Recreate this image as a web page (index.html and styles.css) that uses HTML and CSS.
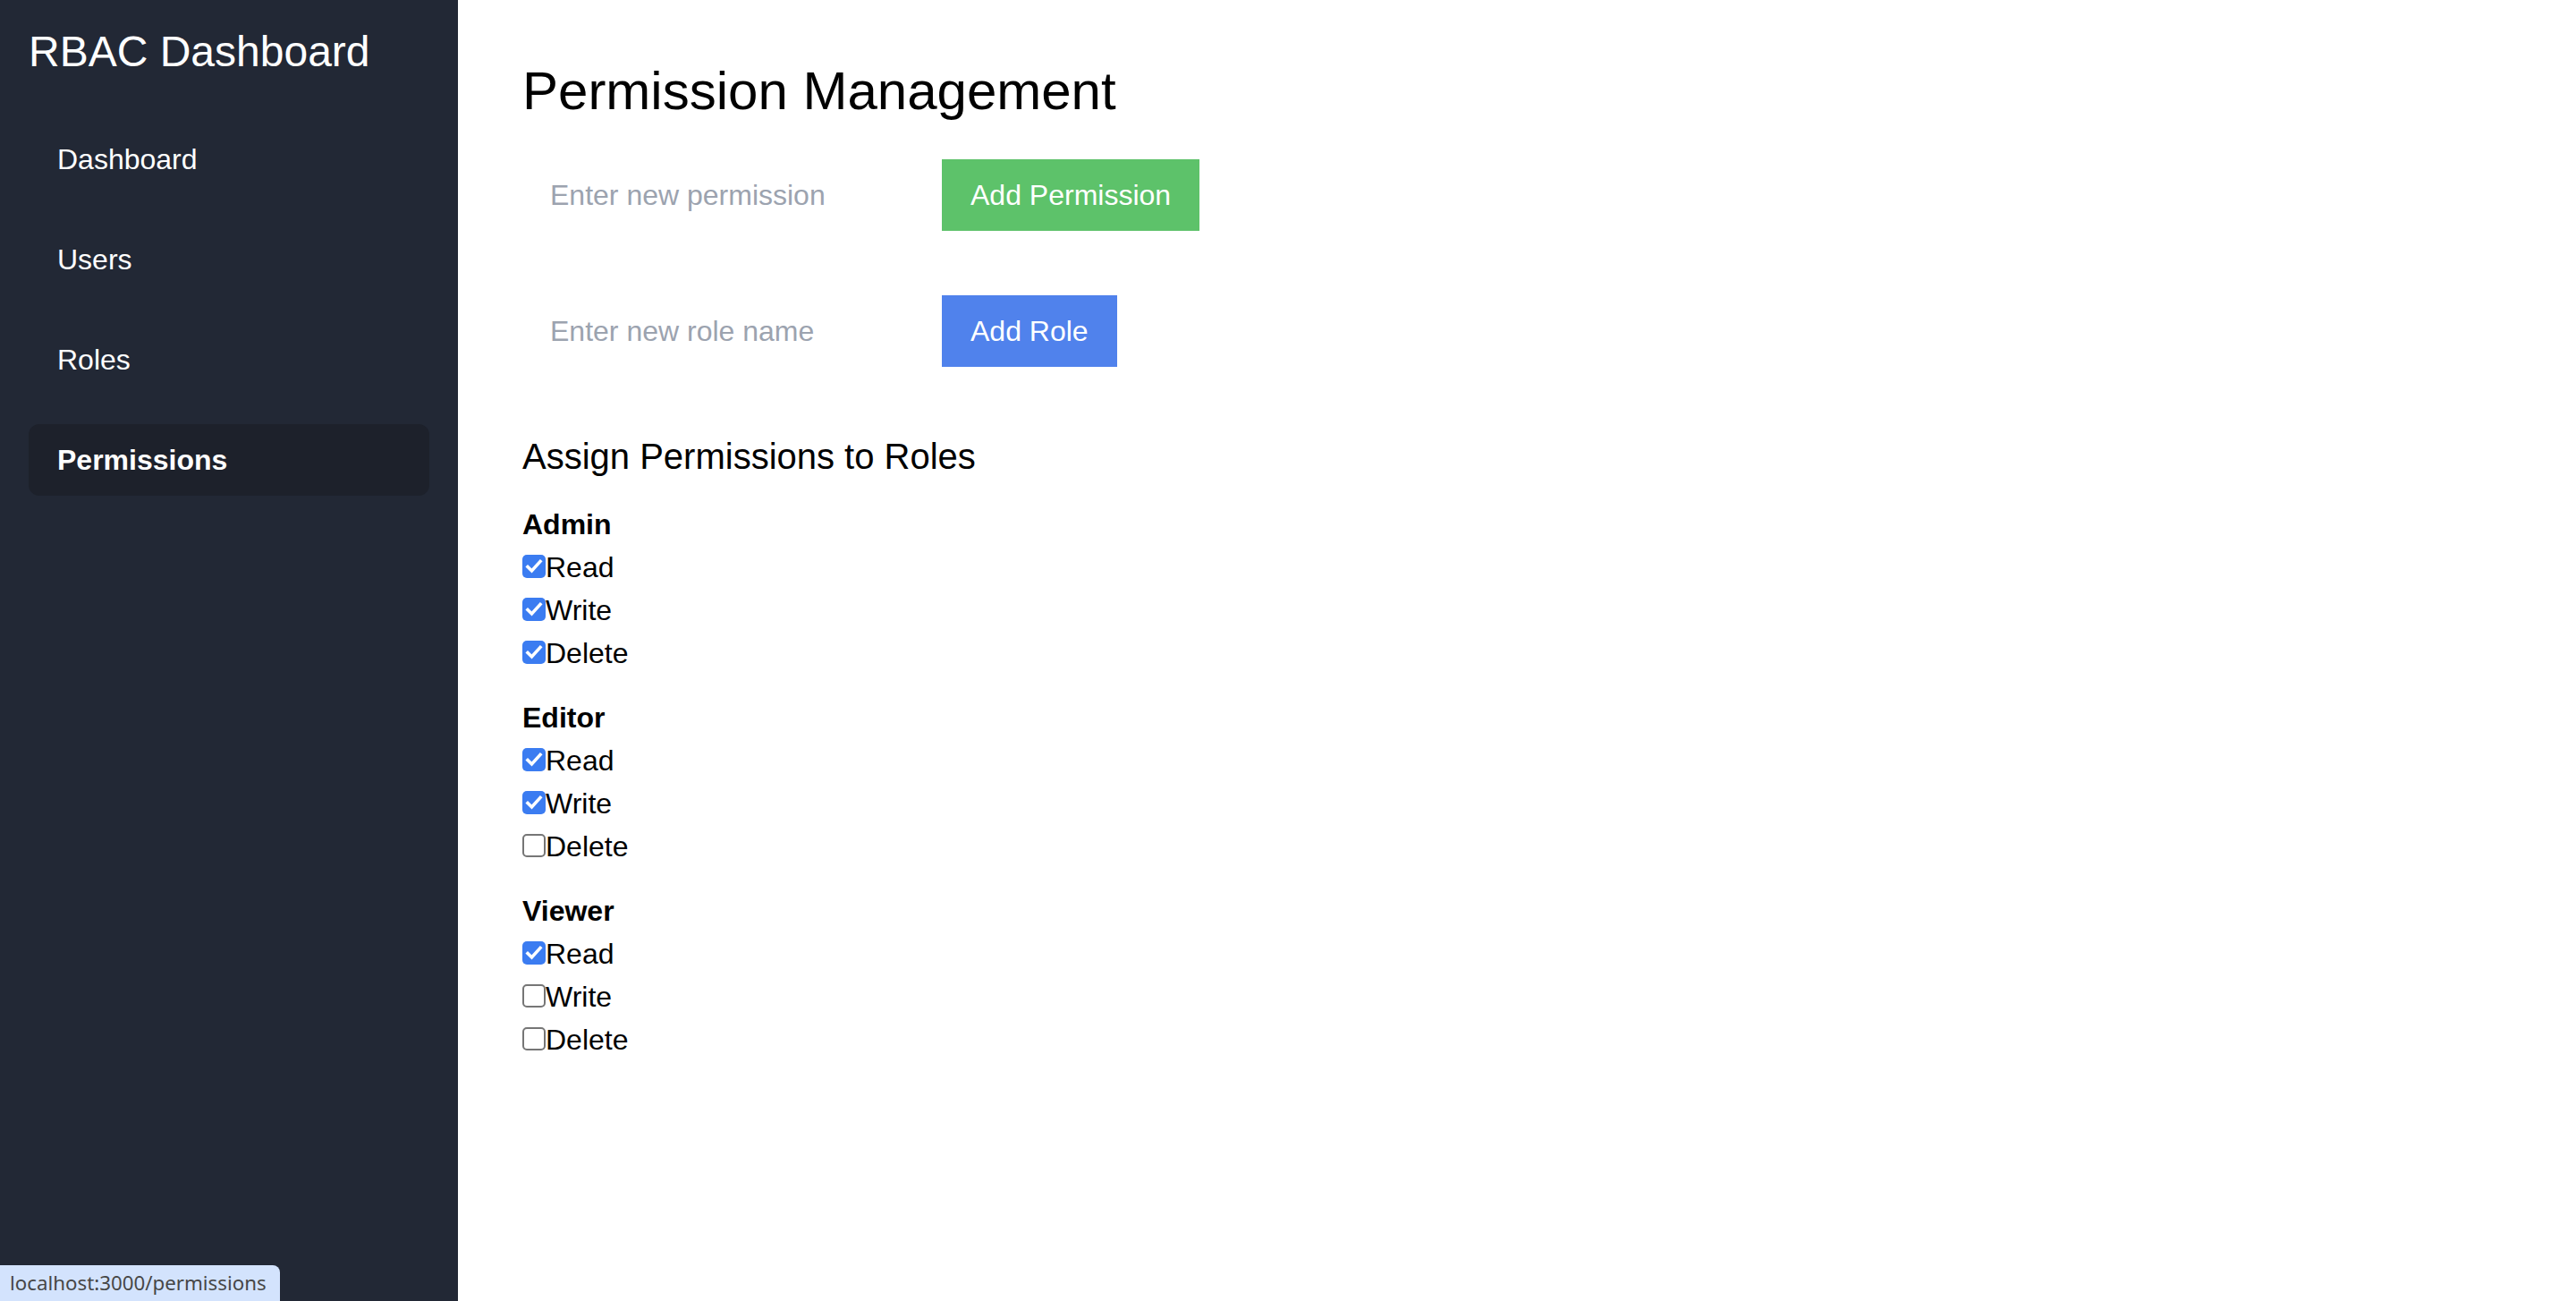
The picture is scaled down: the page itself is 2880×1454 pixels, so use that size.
FILE: index.html
```html
<!DOCTYPE html>
<html lang="en">
<head>
<meta charset="utf-8">
<title>RBAC Dashboard</title>
<link rel="stylesheet" href="styles.css">
</head>
<body>
<aside class="sidebar">
  <h2 class="brand">RBAC Dashboard</h2>
  <nav class="nav">
    <a class="nav-item" href="#">Dashboard</a>
    <a class="nav-item" href="#">Users</a>
    <a class="nav-item" href="#">Roles</a>
    <a class="nav-item active" href="#">Permissions</a>
  </nav>
</aside>
<main class="main">
  <h1 class="title">Permission Management</h1>
  <div class="row row-first">
    <input class="text-input" type="text" placeholder="Enter new permission">
    <button class="btn btn-green">Add Permission</button>
  </div>
  <div class="row row-second">
    <input class="text-input" type="text" placeholder="Enter new role name">
    <button class="btn btn-blue">Add Role</button>
  </div>
  <h2 class="subtitle">Assign Permissions to Roles</h2>

  <div class="role">
    <div class="role-name">Admin</div>
    <label class="perm"><span class="box on"><svg viewBox="0 0 26 26"><path d="M6 13.5 L10.5 18 L20 7.5"/></svg></span>Read</label>
    <label class="perm"><span class="box on"><svg viewBox="0 0 26 26"><path d="M6 13.5 L10.5 18 L20 7.5"/></svg></span>Write</label>
    <label class="perm"><span class="box on"><svg viewBox="0 0 26 26"><path d="M6 13.5 L10.5 18 L20 7.5"/></svg></span>Delete</label>
  </div>
  <div class="role">
    <div class="role-name">Editor</div>
    <label class="perm"><span class="box on"><svg viewBox="0 0 26 26"><path d="M6 13.5 L10.5 18 L20 7.5"/></svg></span>Read</label>
    <label class="perm"><span class="box on"><svg viewBox="0 0 26 26"><path d="M6 13.5 L10.5 18 L20 7.5"/></svg></span>Write</label>
    <label class="perm"><span class="box"></span>Delete</label>
  </div>
  <div class="role">
    <div class="role-name">Viewer</div>
    <label class="perm"><span class="box on"><svg viewBox="0 0 26 26"><path d="M6 13.5 L10.5 18 L20 7.5"/></svg></span>Read</label>
    <label class="perm"><span class="box"></span>Write</label>
    <label class="perm"><span class="box"></span>Delete</label>
  </div>
</main>
<div class="status">localhost:3000/permissions</div>
</body>
</html>
```
FILE: styles.css
```css
html, body {
  margin: 0;
  padding: 0;
}
body {
  display: flex;
  min-height: 1454px;
  font-family: "Liberation Sans", Arial, sans-serif;
  color: #000;
  background: #fff;
}
.sidebar {
  width: 512px;
  flex: 0 0 512px;
  box-sizing: border-box;
  background: #222835;
  color: #fff;
  padding: 30px 32px 0 32px;
}
.brand {
  margin: 0 0 53px 0;
  font-size: 48px;
  font-weight: normal;
  line-height: normal;
}
.nav {
  display: flex;
  flex-direction: column;
  gap: 32px;
}
.nav-item {
  display: block;
  padding: 16px 32px;
  font-size: 32px;
  line-height: 48px;
  color: #fff;
  text-decoration: none;
  border-radius: 12px;
}
.nav-item.active {
  background: #1d212b;
  font-weight: bold;
}
.main {
  flex: 1;
  padding: 66px 64px 64px 72px;
}
.title {
  margin: 0 0 30px 0;
  font-size: 60px;
  line-height: 72px;
  font-weight: normal;
}
.row {
  display: flex;
  align-items: center;
  height: 100px;
  gap: 16px;
}
.row-first {
  margin-bottom: 52px;
}
.row-second {
  margin-bottom: 62px;
}
.text-input {
  width: 453px;
  height: 100px;
  box-sizing: border-box;
  border: 0;
  outline: none;
  padding: 0 0 0 31px;
  font-family: "Liberation Sans", Arial, sans-serif;
  font-size: 32px;
  color: #000;
  background: #fff;
}
.text-input::placeholder {
  color: #9ca3af;
}
.btn {
  height: 80px;
  border: 0;
  padding: 0 32px;
  font-family: "Liberation Sans", Arial, sans-serif;
  font-size: 32px;
  line-height: 48px;
  color: #fff;
  cursor: pointer;
}
.btn-green {
  background: #5dc26a;
}
.btn-blue {
  background: #5082ec;
}
.subtitle {
  margin: 0 0 24px 0;
  font-size: 40px;
  line-height: 56px;
  font-weight: normal;
}
.role {
  margin-bottom: 24px;
}
.role-name {
  font-size: 32px;
  line-height: 48px;
  font-weight: bold;
}
.perm {
  display: flex;
  align-items: center;
  height: 48px;
  font-size: 32px;
  line-height: 48px;
}
.box {
  box-sizing: border-box;
  width: 26px;
  height: 26px;
  margin: -3px 0 0 0;
  border: 2.5px solid #767676;
  border-radius: 5px;
  background: #fff;
  display: flex;
}
.box.on {
  border: 0;
  background: #3b7cf1;
}
.box svg {
  width: 26px;
  height: 26px;
}
.box svg path {
  fill: none;
  stroke: #fff;
  stroke-width: 3.6;
  stroke-linecap: square;
  stroke-linejoin: miter;
}
.status {
  position: fixed;
  left: 0;
  bottom: 0;
  height: 40px;
  padding: 0 15px 0 11px;
  box-sizing: border-box;
  background: #d3e3fd;
  color: #474747;
  font-family: "Noto Sans", "Open Sans", sans-serif;
  font-size: 22.3px;
  line-height: 40px;
  border-top-right-radius: 8px;
}
```
